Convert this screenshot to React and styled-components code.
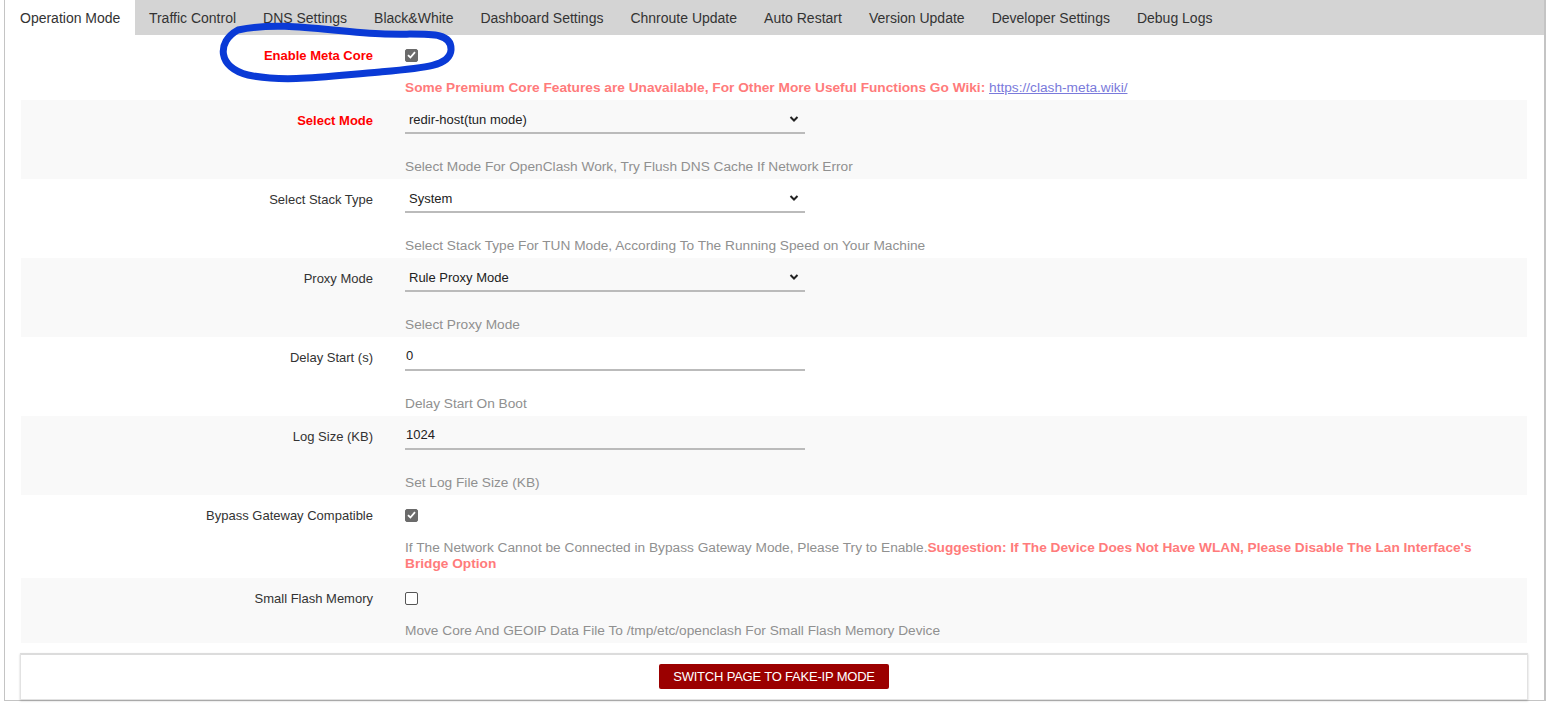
import React from "react";
import styled, { createGlobalStyle } from "styled-components";

const Global = createGlobalStyle`
  html, body { margin: 0; padding: 0; background: #fff; }
  body { font-family: "Liberation Sans", Arial, sans-serif; color: #333; }
  * { box-sizing: border-box; }
`;

const Page = styled.div`
  position: relative;
  width: 1548px;
  height: 710px;
`;

const Frame = styled.div`
  margin: 0 2px 0 4px;
  border-left: 1px solid #c4c4c4;
  border-right: 2px solid #c4c4c4;
  border-bottom: 1px solid #c4c4c4;
`;

const TabBar = styled.div`
  display: flex;
  height: 35px;
  background: #d4d4d4;
`;

const Tab = styled.div`
  display: flex;
  align-items: center;
  padding: 0 ${(p) => (p.$active ? "15px" : "13.5px")};
  font-size: 14px;
  color: #333;
  background: ${(p) => (p.$active ? "#fff" : "transparent")};
  white-space: nowrap;
`;

const Content = styled.div`
  padding: 0 17px 0 16px;
`;

const Row = styled.div`
  display: grid;
  grid-template-columns: 352px 1fr;
  column-gap: 32px;
  padding: 6px 0 ${(p) => (p.$tall ? "6px" : "4px")};
  background: ${(p) => (p.$alt ? "#f9f9f9" : "transparent")};
`;

const Label = styled.div`
  height: 28px;
  display: flex;
  align-items: center;
  justify-content: flex-end;
  font-size: 13px;
  color: ${(p) => (p.$red ? "#ff0000" : "#333")};
  font-weight: ${(p) => (p.$red ? "bold" : "normal")};
`;

const Field = styled.div`
  display: flex;
  flex-direction: column;
`;

const Control = styled.div`
  height: 28px;
  display: flex;
  align-items: center;
`;

const SelectBox = styled.div`
  width: 400px;
  height: 28px;
  display: flex;
  align-items: center;
  border-bottom: 2px solid #bbb;
  padding: 0 6px 0 0;
`;

const SelectEl = styled.select`
  flex: 1;
  appearance: none;
  -webkit-appearance: none;
  border: none;
  background: transparent;
  font-family: "Liberation Sans", Arial, sans-serif;
  font-size: 13px;
  color: #222;
  padding: 0 0 0 4px;
  height: 26px;
  outline: none;
`;

const TextInput = styled.input`
  width: 400px;
  height: 28px;
  border: none;
  border-bottom: 2px solid #bbb;
  background: transparent;
  font-family: "Liberation Sans", Arial, sans-serif;
  font-size: 13px;
  color: #222;
  padding: 0 0 2px 1px;
  outline: none;
`;

const Check = styled.span`
  width: 13px;
  height: 13px;
  border-radius: 2px;
  display: inline-flex;
  align-items: center;
  justify-content: center;
  background: ${(p) => (p.$on ? "#6b6b6b" : "#fff")};
  border: 1px solid ${(p) => (p.$on ? "#6b6b6b" : "#555")};
`;

const Desc = styled.div`
  margin-top: ${(p) => (p.$gap ? "25px" : "11px")};
  font-size: 13.7px;
  line-height: 16px;
  color: #909090;
  max-width: 1085px;
`;

const Warn = styled.span`
  color: #ff7b7b;
  font-weight: bold;
`;

const Link = styled.a`
  color: #7a7adb;
  text-decoration: underline;
  font-weight: normal;
`;

const Footer = styled.div`
  margin: 10px -1px 0 -1px;
  border: 1px solid #e2e2e2;
  border-top: 2px solid #dcdcdc;
  box-shadow: 0 1px 2px rgba(0, 0, 0, 0.2);
  padding: 9px 0 10px;
  display: flex;
  justify-content: center;
`;

const Button = styled.button`
  height: 25px;
  width: 230px;
  background: #9b0000;
  color: #fff;
  border: none;
  border-radius: 2px;
  font-family: "Liberation Sans", Arial, sans-serif;
  font-size: 13px;
  letter-spacing: -0.2px;
  text-transform: uppercase;
  padding: 0;
`;

const Annotation = styled.svg`
  position: absolute;
  left: 0;
  top: 0;
  pointer-events: none;
`;

const Chevron = () => (
  <svg width="10" height="8" viewBox="0 0 10 8">
    <path d="M1.5 2 L5 5.5 L8.5 2" fill="none" stroke="#222" strokeWidth="2" />
  </svg>
);

const Tick = () => (
  <svg width="9" height="8" viewBox="0 0 9 8">
    <path d="M1 4.2 L3.4 6.5 L8 1.2" fill="none" stroke="#fff" strokeWidth="1.8" />
  </svg>
);

const tabs = [
  "Operation Mode",
  "Traffic Control",
  "DNS Settings",
  "Black&White",
  "Dashboard Settings",
  "Chnroute Update",
  "Auto Restart",
  "Version Update",
  "Developer Settings",
  "Debug Logs",
];

const Select = ({ value }) => (
  <SelectBox>
    <SelectEl defaultValue={value}>
      <option>{value}</option>
    </SelectEl>
    <Chevron />
  </SelectBox>
);

export default function App() {
  return (
    <Page>
      <Global />
      <Frame>
        <TabBar>
          {tabs.map((t, i) => (
            <Tab key={t} $active={i === 0}>
              {t}
            </Tab>
          ))}
        </TabBar>
        <Content>
          <Row>
            <Label $red>Enable Meta Core</Label>
            <Field>
              <Control>
                <Check $on>
                  <Tick />
                </Check>
              </Control>
              <Desc>
                <Warn>
                  Some Premium Core Features are Unavailable, For Other More Useful Functions Go Wiki:{" "}
                </Warn>
                <Link href="#">https://clash-meta.wiki/</Link>
              </Desc>
            </Field>
          </Row>
          <Row $alt>
            <Label $red>Select Mode</Label>
            <Field>
              <Select value="redir-host(tun mode)" />
              <Desc $gap>Select Mode For OpenClash Work, Try Flush DNS Cache If Network Error</Desc>
            </Field>
          </Row>
          <Row>
            <Label>Select Stack Type</Label>
            <Field>
              <Select value="System" />
              <Desc $gap>Select Stack Type For TUN Mode, According To The Running Speed on Your Machine</Desc>
            </Field>
          </Row>
          <Row $alt>
            <Label>Proxy Mode</Label>
            <Field>
              <Select value="Rule Proxy Mode" />
              <Desc $gap>Select Proxy Mode</Desc>
            </Field>
          </Row>
          <Row>
            <Label>Delay Start (s)</Label>
            <Field>
              <TextInput defaultValue="0" />
              <Desc $gap>Delay Start On Boot</Desc>
            </Field>
          </Row>
          <Row $alt>
            <Label>Log Size (KB)</Label>
            <Field>
              <TextInput defaultValue="1024" />
              <Desc $gap>Set Log File Size (KB)</Desc>
            </Field>
          </Row>
          <Row $tall>
            <Label>Bypass Gateway Compatible</Label>
            <Field>
              <Control>
                <Check $on>
                  <Tick />
                </Check>
              </Control>
              <Desc>
                If The Network Cannot be Connected in Bypass Gateway Mode, Please Try to Enable.
                <Warn>
                  Suggestion: If The Device Does Not Have WLAN, Please Disable The Lan Interface's Bridge Option
                </Warn>
              </Desc>
            </Field>
          </Row>
          <Row $alt>
            <Label>Small Flash Memory</Label>
            <Field>
              <Control>
                <Check />
              </Control>
              <Desc>Move Core And GEOIP Data File To /tmp/etc/openclash For Small Flash Memory Device</Desc>
            </Field>
          </Row>
          <Footer>
            <Button>Switch Page to Fake-IP Mode</Button>
          </Footer>
        </Content>
      </Frame>
      <Annotation width="1548" height="710" viewBox="0 0 1548 710">
        <path
          d="M 238 30 C 285 20, 335 33, 385 34 C 425 35, 452 30, 451 50 C 450 66, 425 68, 380 72 C 330 76, 285 83, 248 75 C 218 68, 216 42, 238 30 Z"
          fill="none"
          stroke="#0a3ad6"
          strokeWidth="7"
          strokeLinejoin="round"
        />
      </Annotation>
    </Page>
  );
}
